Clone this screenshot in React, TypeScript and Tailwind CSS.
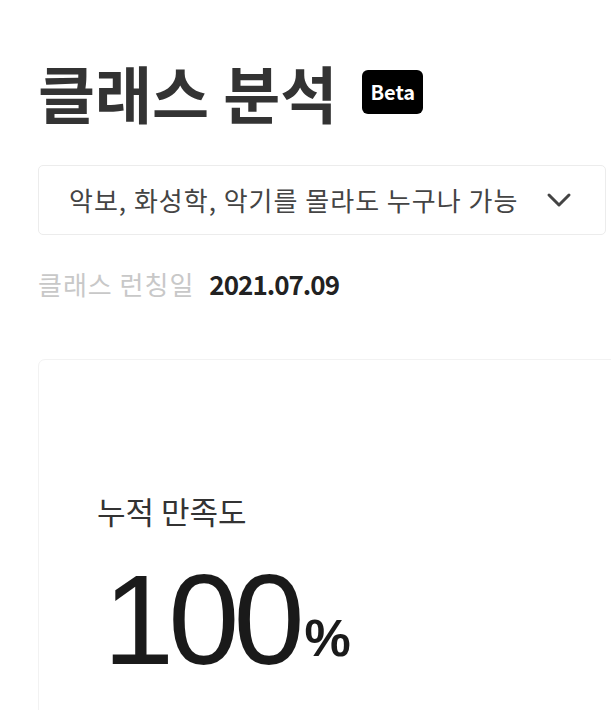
const kr = "font-['Noto_Sans_CJK_KR','Noto_Sans',sans-serif]";

function Chevron() {
  return (
    <svg width="26" height="16" viewBox="0 0 26 16" fill="none" className="text-[#444]">
      <polyline points="3,3 13,13 23,3" stroke="currentColor" strokeWidth="3" strokeLinecap="round" strokeLinejoin="round" />
    </svg>
  );
}

export default function App() {
  return (
    <div className={`min-h-screen overflow-hidden bg-white ${kr}`}>
      <div className="pl-[38px] pt-[61px]">
        <div className="flex items-center gap-[25px]">
          <h1 className="text-[62px] font-bold leading-none text-[#333]">클래스 분석</h1>
          <span className="flex h-[44px] w-[61px] items-center justify-center rounded-[6px] bg-black text-[20px] font-bold text-white">
            Beta
          </span>
        </div>

        <button className="mt-[42px] flex h-[70px] w-[568px] items-center justify-between rounded-[5px] border border-[#ececec] pl-[30px] pr-[33px] text-left">
          <span className="text-[26px] leading-none tracking-[1px] text-[#444]">악보, 화성학, 악기를 몰라도 누구나 가능</span>
          <Chevron />
        </button>

        <div className="mt-[36px] flex items-center gap-[15px] leading-none">
          <span className="text-[26px] tracking-[1px] text-[#c8c8c8]">클래스 런칭일</span>
          <span className="text-[26px] font-bold tracking-[-1px] text-[#222]">2021.07.09</span>
        </div>

        <div className="mt-[62px] w-[640px] rounded-[7px] border border-[#f2f2f2] pb-[40px] pl-[58px] pt-[135px]">
          <div className="text-[31px] leading-none text-[#333]">누적 만족도</div>
          <div className="ml-[6px] mt-[30px] font-['Liberation_Sans',sans-serif] leading-none text-[#1a1a1a]">
            <span className="text-[128px] tracking-[-6px]">100</span>
            <span className="ml-[6px] align-[8px] text-[52px] font-bold">%</span>
          </div>
        </div>
      </div>
    </div>
  );
}
